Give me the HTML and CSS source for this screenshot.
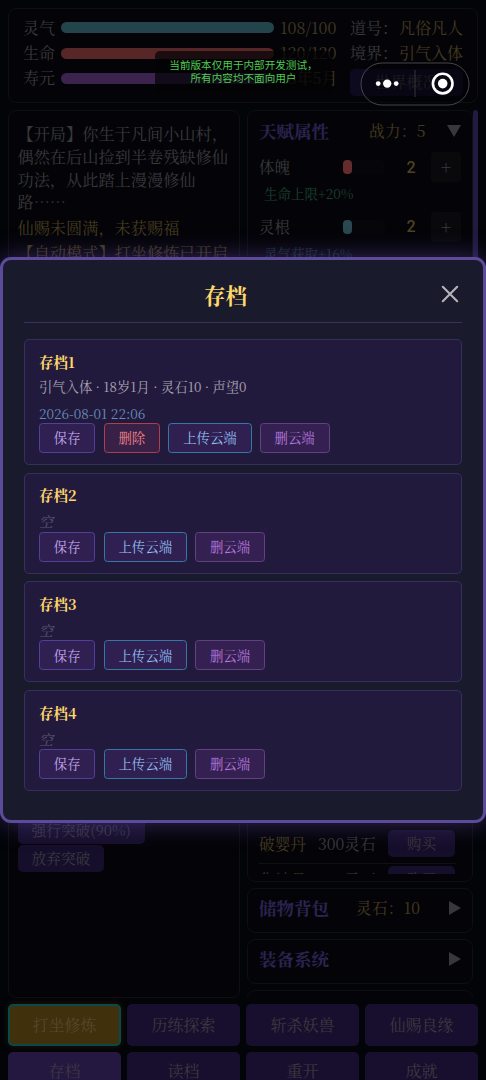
FILE: index.html
```html
<!DOCTYPE html>
<html lang="zh-CN">
<head>
<meta charset="utf-8">
<title>存档</title>
<link rel="stylesheet" href="styles.css">
</head>
<body>
<div class="app">
  <header class="panel status">
    <div class="stats">
      <div class="stat"><span class="label">灵气</span><i class="bar qi"></i><span class="val">108/100</span></div>
      <div class="stat"><span class="label">生命</span><i class="bar hp"></i><span class="val">120/120</span></div>
      <div class="stat"><span class="label">寿元</span><i class="bar age"></i><span class="val">18年5月</span></div>
    </div>
    <div class="identity">
      <div class="idrow"><span>道号：</span><span class="gold">凡俗凡人</span></div>
      <div class="idrow"><span>境界：</span><span class="gold">引气入体</span></div>
      <div class="world">世界概况</div>
    </div>
  </header>
  <main class="main">
    <section class="panel log">
      <div class="entries">
        <p>【开局】你生于凡间小山村，<br>偶然在后山捡到半卷残缺修仙<br>功法，从此踏上漫漫修仙<br>路<span class="dots">……</span></p>
        <p class="gold">仙赐未圆满，未获赐福</p>
        <p class="gold">【自动模式】打坐修炼已开启</p>
      </div>
      <div class="choices">
        <div class="choice">强行突破(90%)</div>
        <div class="choice">放弃突破</div>
      </div>
    </section>
    <section class="side">
      <div class="panel talents">
        <div class="head"><b>天赋属性</b><span class="gold">战力：5</span><svg class="tri" viewBox="0 0 14 14"><path d="M0 1h14L7 13z"/></svg></div>
        <div class="attr"><span>体魄</span><i class="track"><i class="fill red"></i></i><b class="num">2</b><span class="plus">+</span></div>
        <div class="effect">生命上限+20%</div>
        <div class="attr"><span>灵根</span><i class="track"><i class="fill blue"></i></i><b class="num">2</b><span class="plus">+</span></div>
        <div class="effect dim">灵气获取+16%</div>
      </div>
      <div class="panel shop">
        <div class="goods">
          <div class="item"><span class="gold">破婴丹</span><span class="price">300灵石</span><span class="buy">购买</span></div>
          <div class="item"><span class="gold">化神丹</span><span class="price">500灵石</span><span class="buy">购买</span></div>
        </div>
      </div>
      <div class="panel fold"><div class="head"><b>储物背包</b><span class="gold">灵石：10</span><svg class="tri" viewBox="0 0 14 14"><path d="M1 0v14l12-7z"/></svg></div></div>
      <div class="panel fold"><div class="head"><b>装备系统</b><svg class="tri" viewBox="0 0 14 14"><path d="M1 0v14l12-7z"/></svg></div></div>
      <div class="panel fold"></div>
    </section>
    <div class="scroll"></div>
  </main>
  <nav class="actions">
    <div class="act active">打坐修炼</div><div class="act">历练探索</div><div class="act">斩杀妖兽</div><div class="act">仙赐良缘</div>
    <div class="act pressed">存档</div><div class="act">读档</div><div class="act">重开</div><div class="act">成就</div>
  </nav>
</div>

<div class="modal">
  <div class="modal-head">
    <h1>存档</h1>
    <svg class="close" viewBox="0 0 18 18"><path d="M1.8 1.8l14.4 14.4M16.2 1.8L1.8 16.2"/></svg>
  </div>
  <div class="slot full">
    <h2>存档1</h2>
    <div class="info">引气入体 · 18岁1月 · 灵石10 · 声望0</div>
    <div class="date">2026-08-01 22:06</div>
    <div class="btns"><span class="btn save">保存</span><span class="btn del">删除</span><span class="btn up">上传云端</span><span class="btn cloud">删云端</span></div>
  </div>
  <div class="slot">
    <h2>存档2</h2>
    <div class="empty">空</div>
    <div class="btns"><span class="btn save">保存</span><span class="btn up">上传云端</span><span class="btn cloud">删云端</span></div>
  </div>
  <div class="slot">
    <h2>存档3</h2>
    <div class="empty">空</div>
    <div class="btns"><span class="btn save">保存</span><span class="btn up">上传云端</span><span class="btn cloud">删云端</span></div>
  </div>
  <div class="slot">
    <h2>存档4</h2>
    <div class="empty">空</div>
    <div class="btns"><span class="btn save">保存</span><span class="btn up">上传云端</span><span class="btn cloud">删云端</span></div>
  </div>
</div>

<div class="toast">当前版本仅用于内部开发测试，<br>所有内容均不面向用户</div>
<div class="capsule">
  <svg viewBox="0 0 110 44">
    <rect class="pill" x="1" y="1" width="108" height="42" rx="21"/>
    <path class="sep" d="M55 8v27"/>
    <g class="dot"><circle cx="18.2" cy="21.6" r="2.4"/><circle cx="27.2" cy="21.6" r="4.2"/><circle cx="36.2" cy="21.6" r="2.4"/><circle cx="82.7" cy="21.6" r="4.8"/></g>
    <circle class="ring" cx="82.7" cy="21.6" r="9.8"/>
  </svg>
</div>
</body>
</html>
```
FILE: styles.css
```css
* { box-sizing: border-box; }
body {
  margin: 0;
  width: 486px;
  height: 1080px;
  overflow: hidden;
  position: relative;
  background: #030408;
  color: #39393c;
  font: 16px/1 "Noto Serif CJK SC", "Noto Serif SC", "Source Han Serif SC", "Noto Sans CJK SC", serif;
}
h1, h2, p { margin: 0; }
i { display: block; font-style: normal; }
span, b { white-space: nowrap; }
.gold { color: #443b1f; }

.app { height: 1080px; padding: 8px 8px 0; overflow: hidden; display: flex; flex-direction: column; }
.panel { border: 1px solid #0e0e15; border-radius: 8px; background: #040408; }

/* status header */
.status { height: 95px; flex: none; display: flex; justify-content: space-between; padding: 6px 14px; }
.stats { width: 314px; }
.stat { height: 25.4px; display: flex; align-items: center; }
.label { width: 38px; flex: none; }
.bar { width: 213px; height: 11px; flex: none; border-radius: 6px; margin-right: 6px; }
.qi { background: #23444a; }
.hp { background: #572728; }
.age { background: #3c234e; }
.val { color: #403823; font-size: 16px; }
.identity { width: 113px; }
.idrow { height: 25.4px; display: flex; align-items: center; justify-content: space-between; }
.world { height: 27px; margin-top: 3px; border-radius: 5px; background: #0d0a1f; display: flex; align-items: center; justify-content: center; color: #3a3940; }

/* main area */
.main { height: 888px; flex: none; margin-top: 7px; display: flex; overflow: hidden; }
.log { width: 232px; height: 888px; margin-right: 7px; flex: none; padding: 11px 0 0 8.5px; }
.entries { height: 695.5px; line-height: 22.8px; font-size: 16.2px; white-space: nowrap; }
.entries p { margin-bottom: 2.6px; }
.choices { display: flex; flex-direction: column; align-items: flex-start; gap: 1px; }
.choice { height: 26.5px; padding: 0 14px; border-radius: 5px; background: #160f2b; display: flex; align-items: center; font-size: 14.7px; color: #3b3842; }
.side { width: 226px; height: 888px; flex: none; overflow: hidden; display: flex; flex-direction: column; gap: 6px; }
.side .panel { flex: none; }
.scroll { width: 5px; height: 500px; border-radius: 3px; background: #211a43; }
.talents { height: 400px; padding: 5px 10px 0 11px; }
.head { display: flex; align-items: center; height: 29px; font-size: 15.6px; }
.head b { width: 97px; color: #2b2350; font-size: 17.5px; }
.head .gold { width: 66px; text-align: left; letter-spacing: .3px; }
.talents .head .gold { margin-left: 13px; }
.tri { width: 14px; height: 14px; fill: #38383a; margin-left: auto; }
.talents .tri { margin-right: 1px; }
.attr { display: flex; align-items: center; height: 30px; margin-top: 7px; font-size: 15.5px; }
.attr > span:first-child { width: 84px; }
.track { width: 42px; height: 14px; border-radius: 5px; background: #06060a; }
.fill { width: 9px; height: 14px; border-radius: 4px; }
.red { background: #642c2d; }
.blue { background: #2a4850; }
.num { width: 27px; margin-left: 12.5px; text-align: center; color: #4d431f; font: 500 16px Roboto, sans-serif; }
.plus { width: 30px; height: 30px; margin-left: auto; margin-right: 1px; padding-bottom: 2px; background: #09090c; border-radius: 3px; display: flex; align-items: center; justify-content: center; font-size: 18px; }
.effect { height: 22.5px; line-height: 23px; padding-left: 5px; color: #19402d; font-size: 13.5px; }
.dim { color: #1d3038; }
.shop { height: 366px; padding: 0 16px 7px 11px; display: flex; flex-direction: column; justify-content: flex-end; }
.goods { height: 46px; overflow: hidden; }
.item { height: 36px; padding: 0 0 4px; display: flex; align-items: center; border-bottom: 1px solid #101014; font-size: 15.7px; }
.item .gold { width: 59px; }
.price { width: 70px; }
.buy { width: 67px; height: 27px; border-radius: 5px; background: #160f2b; display: flex; align-items: center; justify-content: center; font-size: 14.7px; }
.fold { height: 45px; padding: 4px 10px 0 11px; }

/* bottom actions */
.actions { margin-top: 6px; display: grid; grid-template-columns: repeat(4, 113px); gap: 5.5px 6px; }
.act { height: 42px; border-radius: 5px; background: #180f2e; display: flex; align-items: center; justify-content: center; color: #3c3940; font-size: 16px; }
.active { background: #40300c; border: 2px solid #09494b; color: #56482d; box-shadow: 0 0 7px #211706; }
.pressed { background: #241840; }
.act:nth-child(n+5) { padding-bottom: 4px; }

/* save dialog */
.modal { position: absolute; left: 0; top: 257px; width: 486px; height: 566px; padding: 0 21px; border: 3px solid #5c4b9b; border-radius: 11px; background: #1a1a2d; box-shadow: 0 0 24px rgba(92, 70, 160, .55); }
.modal-head { height: 63px; margin-bottom: 16px; border-bottom: 1px solid #393060; display: flex; align-items: center; justify-content: space-between; padding: 8px 3px 0 180px; }
h1 { font-size: 21.5px; line-height: 30px; font-weight: 700; color: #ffd86c; }
.close { width: 18px; height: 18px; margin-top: -3px; fill: none; stroke: #b4b4b8; stroke-width: 2.1; stroke-linecap: round; }
.slot { height: 101px; margin-bottom: 7.7px; padding: 10.5px 14px 0; border: 1px solid #372e60; border-radius: 5px; background: #221a3d; }
.full { height: 126px; }
h2 { height: 22px; line-height: 22px; font-size: 14.5px; font-weight: 700; color: #ffd86c; }
.info { height: 27px; line-height: 27px; font-size: 13.3px; color: #aaa5b4; white-space: nowrap; }
.date { height: 23.7px; line-height: 27px; font-size: 13.5px; color: #6789b8; }
.empty { height: 25.6px; line-height: 30px; font-size: 14px; font-style: italic; color: #5c566f; }
.btns { display: flex; gap: 8.3px; }
.btn { height: 30px; padding: 0 13.8px; border: 1px solid #51409a; border-radius: 3.5px; background: #302052; display: flex; align-items: center; font-size: 13.4px; color: #c2a6ed; }
.del { border-color: #ad3f4e; color: #f08088; background: #382047; }
.up { border-color: #3578a5; color: #91bff0; }
.cloud { border-color: #624181; color: #b579df; background: #352052; }

/* floating overlays */
.toast { position: absolute; left: 155px; top: 51px; width: 177px; height: 42px; padding: 7px 0 0 0; border-radius: 5px; background: rgba(3, 3, 6, .72); color: #4ecb50; text-align: center; font: 10.6px/13px "Noto Sans CJK SC", sans-serif; white-space: nowrap; }
.capsule { position: absolute; left: 360px; top: 62px; width: 110px; height: 44px; }
.capsule svg { display: block; width: 110px; height: 44px; }
.pill { fill: rgba(3, 3, 7, .55); stroke: #45454a; stroke-width: 1; }
.sep { stroke: #35353a; stroke-width: 1; }
.dot { fill: #fff; }
.ring { fill: none; stroke: #fff; stroke-width: 2.6; }
```
